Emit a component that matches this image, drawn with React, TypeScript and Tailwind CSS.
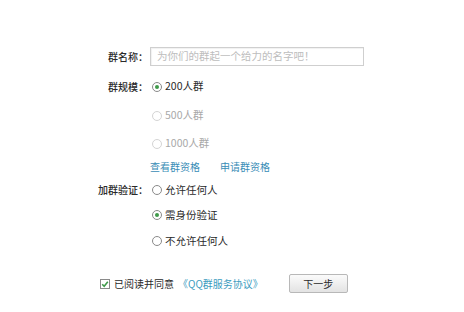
import React from "react";

const font = { fontFamily: '"Noto Sans CJK SC", "Noto Sans", sans-serif' };

function Radio({ checked, disabled }: { checked?: boolean; disabled?: boolean }) {
  return (
    <span
      className={
        "flex h-[10px] w-[10px] items-center justify-center rounded-full border bg-white " +
        (disabled ? "border-[#d4d4d4]" : "border-[#8a8a8a]")
      }
    >
      {checked && <span className="h-[4px] w-[4px] rounded-full bg-[#3f9a4a]" />}
    </span>
  );
}

function Option({ label, checked, disabled }: { label: string; checked?: boolean; disabled?: boolean }) {
  return (
    <div className="flex items-center gap-[3px] pl-[4px]">
      <Radio checked={checked} disabled={disabled} />
      <span className={disabled ? "text-[#a8a8a8]" : "text-[#2a2a2a]"}>{label}</span>
    </div>
  );
}

export default function App() {
  return (
    <div className="h-[312px] w-[464px] bg-white text-[10.5px] leading-none text-[#333]" style={font}>
      <div className="flex flex-col pl-[90px] pt-[47px]">
        <div className="grid grid-cols-[58px_auto] items-center">
          {/* row 1 */}
          <div className="flex h-[19px] items-center justify-end text-[10px] font-medium text-[#2a2a2a]">群名称：</div>
          <div className="ml-[2px] flex h-[19px] w-[214px] items-center border border-[#cfcfcf] pl-[6px] text-[#bdbdbd] shadow-[inset_1px_1px_1px_rgba(0,0,0,0.06)]">
            为你们的群起一个给力的名字吧！
          </div>

          {/* row 2 */}
          <div className="mt-[7px] flex h-[27px] items-center justify-end text-[10px] font-medium text-[#2a2a2a]">群规模：</div>
          <div className="mt-[7px] flex h-[27px] items-center">
            <Option label="200人群" checked />
          </div>
          <div />
          <div className="flex h-[29px] items-center pt-[2px]">
            <Option label="500人群" disabled />
          </div>
          <div />
          <div className="flex h-[27px] items-center pt-[2px]">
            <Option label="1000人群" disabled />
          </div>
          <div />
          <div className="flex h-[22px] items-center gap-[20px] pl-[2px] text-[10px] text-[#3a8db6]">
            <span>查看群资格</span>
            <span>申请群资格</span>
          </div>

          {/* verify */}
          <div className="flex h-[24px] items-center justify-end text-[10px] font-medium text-[#2a2a2a]">加群验证：</div>
          <div className="flex h-[24px] items-center">
            <Option label="允许任何人" />
          </div>
          <div />
          <div className="flex h-[26px] items-center">
            <Option label="需身份验证" checked />
          </div>
          <div />
          <div className="flex h-[26px] items-center">
            <Option label="不允许任何人" />
          </div>
        </div>

        {/* bottom */}
        <div className="mt-[20px] flex h-[19px] items-center pl-[10px] text-[10px]">
          <span className="flex h-[10px] w-[10px] items-center justify-center border border-[#8a8a8a] bg-white">
            <svg width="8" height="8" viewBox="0 0 8 8">
              <path d="M1.2 4.2 L3.2 6.2 L6.8 1.8" fill="none" stroke="#3f9a4a" strokeWidth="1.6" />
            </svg>
          </span>
          <span className="ml-[4px] text-[#2a2a2a]">已阅读并同意</span>
          <span className="ml-[4px] text-[#3c9cc0]">《QQ群服务协议》</span>
          <button className="ml-[26px] flex h-[19px] w-[59px] items-center justify-center rounded-[2px] border border-[#b8b8b8] bg-gradient-to-b from-[#fbfbfb] to-[#e3e3e3] text-[#2a2a2a]">
            下一步
          </button>
        </div>
      </div>
    </div>
  );
}
